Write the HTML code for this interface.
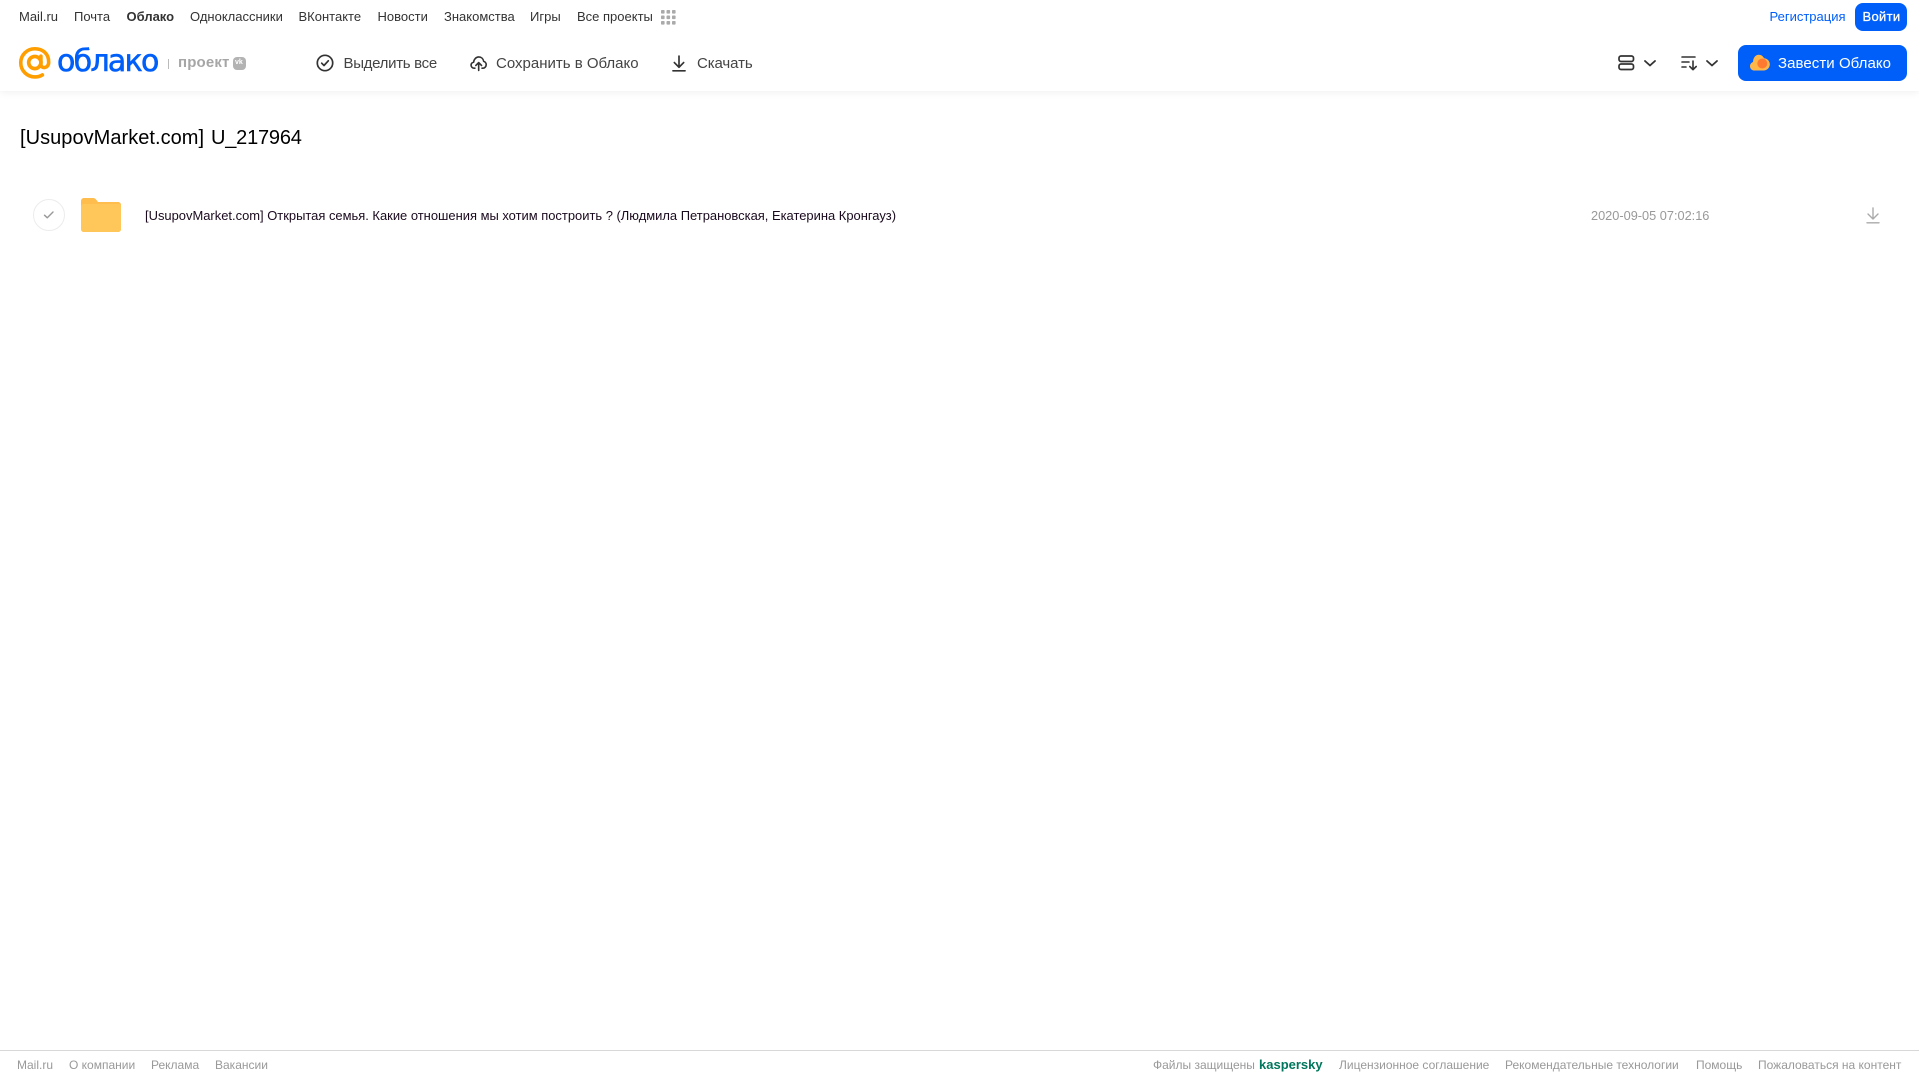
<!DOCTYPE html>
<html lang="ru">
<head>
<meta charset="utf-8">
<title>Облако</title>
<style>
html,body{margin:0;padding:0;background:#fff;}
body{width:1919px;height:1079px;overflow:hidden;position:relative;font-family:"Liberation Sans",Arial,sans-serif;}
.t{position:absolute;white-space:nowrap;line-height:16px;height:16px;}
.n{top:9px;font-size:13px;color:#333;}
.b{top:56px;font-size:15px;color:#444;}
.f{top:1057px;font-size:12px;color:#999;}
svg{position:absolute;overflow:visible;}
#hdr{position:absolute;left:0;top:0;width:1919px;height:91px;background:#fff;box-shadow:0 1px 8px rgba(0,0,0,.07);}
#btn1{position:absolute;left:1855px;top:3px;width:52px;height:28px;background:#005ff9;border-radius:8px;}
#btn2{position:absolute;left:1738px;top:45px;width:169px;height:36px;background:#005ff9;border-radius:8px;}
#circle{position:absolute;left:33px;top:199px;width:30px;height:30px;border:1px solid #ececec;border-radius:50%;}
#fl{position:absolute;left:0;top:1050px;width:1919px;height:1px;background:#d8d8d8;}
</style>
</head>
<body>
<div id="hdr"></div>

<span class="t n" style="left:19px">Mail.ru</span>
<span class="t n" style="left:74px">Почта</span>
<span class="t n" style="left:126.500px;font-weight:bold">Облако</span>
<span class="t n" style="left:190px">Одноклассники</span>
<span class="t n" style="left:298.500px">ВКонтакте</span>
<span class="t n" style="left:377.500px">Новости</span>
<span class="t n" style="left:444px">Знакомства</span>
<span class="t n" style="left:530px">Игры</span>
<span class="t n" style="left:577px">Все проекты</span>
<svg style="left:661px;top:10px" width="15" height="15" viewBox="0 0 15 15" fill="#aaa">
<rect x="0" y="0" width="3.6" height="3.6" rx=".8"/><rect x="5.5" y="0" width="3.6" height="3.6" rx=".8"/><rect x="11" y="0" width="3.6" height="3.6" rx=".8"/>
<rect x="0" y="5.5" width="3.6" height="3.6" rx=".8"/><rect x="5.5" y="5.5" width="3.6" height="3.6" rx=".8"/><rect x="11" y="5.5" width="3.6" height="3.6" rx=".8"/>
<rect x="0" y="11" width="3.6" height="3.6" rx=".8"/><rect x="5.5" y="11" width="3.6" height="3.6" rx=".8"/><rect x="11" y="11" width="3.6" height="3.6" rx=".8"/>
</svg>

<span class="t" style="left:1769.500px;top:9px;font-size:13px;color:#005ff9">Регистрация</span>
<div id="btn1"></div>
<span class="t" style="left:1862.500px;top:9px;font-size:13px;color:#fff;letter-spacing:.3px;-webkit-text-stroke:.3px #fff">Войти</span>

<!-- logo -->
<svg style="left:19px;top:47px" width="32" height="32" viewBox="0 0 33 33" fill="none">
<circle cx="16.3" cy="16" r="6.3" stroke="#ff9e00" stroke-width="3.8"/>
<path d="M22.6 9.5V18c0 4.6 7.9 4.6 8-2.2C30.800 7 24.500 1.800 16.300 1.800 8.300 1.800 1.800 8.200 1.800 16.200c0 8.200 6.500 14.700 14.600 14.700 2.900 0 5.400-.7 7.700-2.100" stroke="#ff9e00" stroke-width="3.700" stroke-linecap="round"/>
</svg>
<span class="t" style="left:57px;top:44px;height:36px;line-height:36px;font-size:30px;color:#005ff9;font-family:'DejaVu Sans',sans-serif;letter-spacing:-1.700px;-webkit-text-stroke:.6px #005ff9">облако</span>
<div style="position:absolute;left:168px;top:59px;width:1px;height:10px;background:#bbb"></div>
<span class="t" style="left:178px;top:55px;font-size:15px;color:#a6a6a6;font-weight:bold;letter-spacing:.15px">проект</span>
<div style="position:absolute;left:233px;top:56.500px;width:13px;height:13px;background:#b3b3b3;border-radius:4px"></div>
<span class="t" style="left:235px;top:59px;font-size:7px;line-height:8px;height:8px;color:#fff;font-weight:bold">vk</span>

<!-- toolbar -->
<svg style="left:316px;top:54px" width="18" height="18" viewBox="0 0 18 18" fill="none" stroke="#333" stroke-width="1.7" stroke-linecap="round" stroke-linejoin="round">
<circle cx="9" cy="9" r="7.7"/><path d="M5.700 9.200l2.300 2.300 4.300-4.700"/>
</svg>
<span class="t b" style="left:343.500px;letter-spacing:-.3px">Выделить все</span>
<svg style="left:470px;top:54.500px" width="17" height="16.500" viewBox="0 0 19 18" fill="none" stroke="#333" stroke-width="1.800" stroke-linecap="round" stroke-linejoin="round">
<path d="M5.500 14.500H4.700C2.700 14.500 1.200 13 1.200 11.200c0-1.800 1.200-3 2.800-3.300C4.300 4.600 6.700 2 9.800 2c2.900 0 5 2.100 5.500 4.900 1.700.4 2.800 2 2.800 3.700 0 2.200-1.700 3.900-3.700 3.900h-1"/>
<path d="M9.700 17V8.500M6.500 11.500l3.200-3.200 3.200 3.200"/>
</svg>
<span class="t b" style="left:496px">Сохранить в Облако</span>
<svg style="left:672px;top:55px" width="14" height="17" viewBox="0 0 15 18" fill="none" stroke="#333" stroke-width="1.800" stroke-linecap="round" stroke-linejoin="round">
<path d="M7.500 1v11.500M2.500 8l5 5 5-5M1 16.800h13"/>
</svg>
<span class="t b" style="left:697px;letter-spacing:-.1px">Скачать</span>

<!-- right toolbar -->
<svg style="left:1618px;top:55px" width="17" height="16" viewBox="0 0 17 16" fill="none" stroke="#333" stroke-width="1.700">
<rect x="1" y="1" width="14.500" height="5.500" rx="2"/><rect x="1" y="9" width="14.500" height="5.500" rx="2"/>
</svg>
<svg style="left:1644px;top:60px" width="12" height="7" viewBox="0 0 12 7" fill="none" stroke="#333" stroke-width="1.800" stroke-linecap="round" stroke-linejoin="round"><path d="M1 1l5 4.500L11 1"/></svg>
<svg style="left:1681px;top:55px" width="17" height="16" viewBox="0 0 17 16" fill="none" stroke="#333" stroke-width="1.600" stroke-linecap="round" stroke-linejoin="round">
<path d="M1 2h13M1 7h7M1 12h4M12 6v8.500M8.800 11.500l3.200 3.200 3.200-3.200"/>
</svg>
<svg style="left:1706px;top:60px" width="12" height="7" viewBox="0 0 12 7" fill="none" stroke="#333" stroke-width="1.800" stroke-linecap="round" stroke-linejoin="round"><path d="M1 1l5 4.500L11 1"/></svg>
<div id="btn2"></div>
<svg style="left:1750px;top:54px" width="20" height="17" viewBox="0 0 20 17">
<path d="M4.500 16.500C2 16.500 0 14.700 0 12.200c0-2 1.300-3.500 3-4.200C3.200 3.700 5.600.8 8.800.8c2.300 0 4.300 1.400 5.200 3.500 3.200.2 5.800 2.800 5.800 6 0 3.400-2.700 6.200-6.200 6.200z" fill="#ffb74a"/>
<circle cx="12.300" cy="9.500" r="5" fill="#ff7a30"/>
</svg>
<span class="t" style="left:1778px;top:56px;font-size:15px;color:#fff;letter-spacing:.06px">Завести Облако</span>

<!-- title -->
<span class="t" style="left:20px;top:125px;height:26px;line-height:26px;font-size:20px;color:#000;letter-spacing:.04px">[UsupovMarket.com]</span>
<span class="t" style="left:211px;top:125px;height:26px;line-height:26px;font-size:20px;color:#000;letter-spacing:-.2px">U_217964</span>

<!-- row -->
<div id="circle"></div>
<svg style="left:43px;top:210px" width="12" height="10" viewBox="0 0 12 10" fill="none" stroke="#999" stroke-width="1.400" stroke-linecap="round" stroke-linejoin="round"><path d="M1.500 5.200l2.800 2.600L10 2"/></svg>
<svg style="left:81px;top:198px" width="40" height="34" viewBox="0 0 40 34">
<path d="M0 3C0 1.300 1.300 0 3 0h9c1.500 0 2.500.6 3.300 1.800L17 4h20c1.700 0 3 1.300 3 3v24c0 1.700-1.300 3-3 3H3c-1.700 0-3-1.300-3-3z" fill="#ffbd4d"/>
<path d="M0 8c0-1.100.900-2 2-2h36c1.100 0 2 .900 2 2v23c0 1.700-1.300 3-3 3H3c-1.700 0-3-1.300-3-3z" fill="#ffc659"/>
</svg>
<span class="t" style="left:145px;top:208px;font-size:12.950px;color:#1a0a1e">[UsupovMarket.com] Открытая семья. Какие отношения мы хотим построить ? (Людмила Петрановская, Екатерина Кронгауз)</span>
<span class="t" style="left:1591px;top:208px;font-size:12.750px;color:#999">2020-09-05 07:02:16</span>
<svg style="left:1866px;top:207px" width="14" height="17" viewBox="0 0 14 17" fill="none" stroke="#aaa" stroke-width="1.400" stroke-linecap="round" stroke-linejoin="round">
<path d="M7 1v10.500M2 7l5 5 5-5M1 15.800h12"/>
</svg>

<!-- footer -->
<div id="fl"></div>
<span class="t f" style="left:17px">Mail.ru</span>
<span class="t f" style="left:69px">О компании</span>
<span class="t f" style="left:151px">Реклама</span>
<span class="t f" style="left:215px">Вакансии</span>
<span class="t f" style="left:1153px">Файлы защищены</span>
<span class="t f" style="left:1259px;font-size:13px;font-weight:bold;color:#00775c">kaspersky</span>
<span class="t f" style="left:1339px">Лицензионное соглашение</span>
<span class="t f" style="left:1505px">Рекомендательные технологии</span>
<span class="t f" style="left:1696px">Помощь</span>
<span class="t f" style="left:1758px">Пожаловаться на контент</span>
</body>
</html>
